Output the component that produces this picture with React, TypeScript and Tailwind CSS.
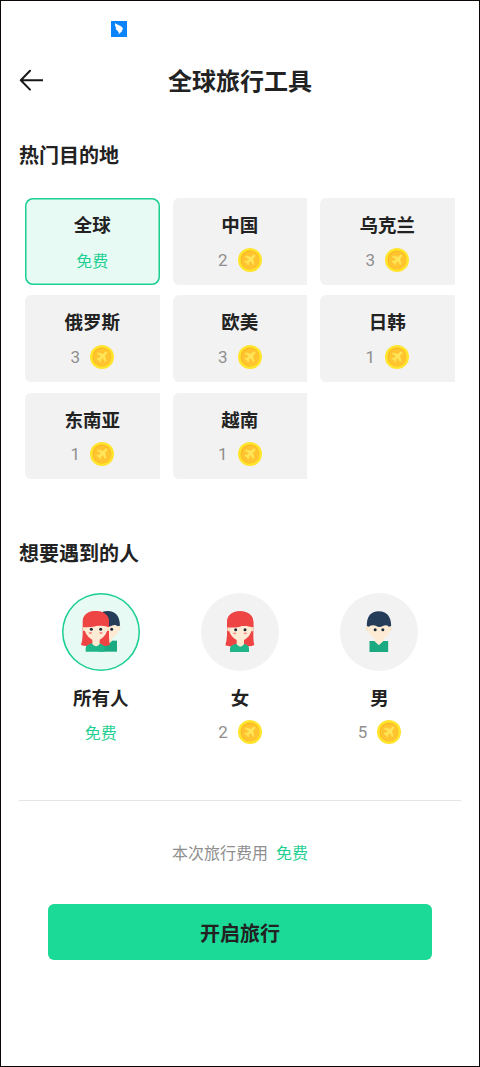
import { useState } from 'react';

interface Destination {
  name: string;
  price: number;
}

interface Person {
  id: 'all' | 'female' | 'male';
  label: string;
  price: number;
}

const destinations: Destination[] = [
  { name: '全球', price: 0 },
  { name: '中国', price: 2 },
  { name: '乌克兰', price: 3 },
  { name: '俄罗斯', price: 3 },
  { name: '欧美', price: 3 },
  { name: '日韩', price: 1 },
  { name: '东南亚', price: 1 },
  { name: '越南', price: 1 },
];

const people: Person[] = [
  { id: 'all', label: '所有人', price: 0 },
  { id: 'female', label: '女', price: 2 },
  { id: 'male', label: '男', price: 5 },
];

function Coin() {
  return (
    <svg className="w-6 h-6" viewBox="0 0 24 24">
      <circle cx="12" cy="12" r="12" fill="#ffe42e" />
      <circle cx="12" cy="12" r="9.4" fill="#f9b51f" />
      <circle cx="12.3" cy="12.4" r="8.8" fill="#ffc42f" />
      <path
        d="M16.9 7.1c-.6-.5-1.5-.2-2.1.4l-1.7 1.7-5-1.3-.9.9 4 2.3-2 2.1-1.7-.2-.7.7 2.2 1.2 1.2 2.2.7-.7-.2-1.7 2.1-2 2.3 4 .9-.9-1.3-5 1.7-1.7c.6-.6 1-1.5.5-2z"
        fill="#ffe65a"
        stroke="#ffe65a"
        strokeWidth="0.5"
      />
    </svg>
  );
}

function Girl() {
  return (
    <g>
      <path d="M96 126V112C96 91 111 79 135 79S175 91 175 112V150C175 164 176 173 178 180Q166 186 153 183H118Q104 186 91 181Q95 169 96 150Z" fill="#ef4444" />
      <path d="M105 201V190Q105 182 113 180L124 176H147L156 180Q162 182 162 190V201Z" fill="#1fb588" />
      <path d="M125 158H147V178Q136 192 125 178Z" fill="#fde8d0" />
      <path d="M103 123H169V139Q165 153 152 162Q136 174 120 162Q106 152 103 139Z" fill="#fdebd5" />
      <rect x="97" y="126" width="7" height="13" rx="3" fill="#fbe3c6" />
      <rect x="168" y="126" width="7" height="13" rx="3" fill="#fbe3c6" />
      <path d="M97 127V112C97 91 111 79 135 79S175 91 175 112V126Q160 127 149 119Q130 130 97 127Z" fill="#ef4444" />
      <circle cx="122" cy="134" r="4.5" fill="#1d2b38" />
      <circle cx="150" cy="134" r="4.5" fill="#1d2b38" />
      <ellipse cx="119" cy="145" rx="5" ry="2.7" fill="#ff8b83" />
      <ellipse cx="151" cy="145" rx="5" ry="2.7" fill="#ff8b83" />
    </g>
  );
}

function Boy() {
  return (
    <g>
      <path d="M105 201V168H161V201Z" fill="#1ba981" />
      <path d="M120 160H146V169L133 181L120 169Z" fill="#fdebd5" />
      <rect x="95" y="123" width="10" height="15" rx="5" fill="#fbe3c6" />
      <rect x="161" y="123" width="10" height="15" rx="5" fill="#fbe3c6" />
      <path d="M101 118H166V136Q165 147 154 155Q133 174 113 155Q102 147 101 136Z" fill="#fdebd5" />
      <path d="M97 123Q96 80 133 79Q169 80 170 123L163 125Q156 118 145 123Q134 129 124 122Q112 119 103 125Z" fill="#263d59" />
      <circle cx="122" cy="134" r="4.5" fill="#1d2b38" />
      <circle cx="145" cy="134" r="4.5" fill="#1d2b38" />
    </g>
  );
}

function Avatar({ id }: { id: Person['id'] }) {
  if (id === 'all') {
    return (
      <svg className="w-[78px] h-[78px] shrink-0" viewBox="36 24 234 234">
        <g transform="translate(40 -1)">
          <Boy />
        </g>
        <g transform="translate(2 -1)">
          <Girl />
        </g>
      </svg>
    );
  }
  return (
    <svg className="w-[78px] h-[78px] shrink-0" viewBox={id === 'female' ? '18 24 234 234' : '16.5 24 234 234'}>
      {id === 'female' ? <Girl /> : <Boy />}
    </svg>
  );
}

function Price({ price }: { price: number }) {
  if (price === 0) {
    return <div className="h-6 flex items-center justify-center text-base text-[#1fd092]">免费</div>;
  }
  return (
    <div className="h-6 flex items-center justify-center gap-2.5 font-['Roboto','Noto_Sans_CJK_SC',sans-serif] text-[17px] text-[#8f8f8f]">
      <span className="pt-0.5">{price}</span>
      <Coin />
    </div>
  );
}

export default function App() {
  const [destination, setDestination] = useState('全球');
  const [person, setPerson] = useState<Person['id']>('all');

  return (
    <div className="w-[480px] h-[1067px] border border-[#0c0704] bg-white text-[#222] font-['Noto_Sans_CJK_SC',sans-serif] overflow-hidden">
      {/* Status bar */}
      <div className="h-[52px] pt-5 pl-[110px]">
        <svg className="w-4 h-4" viewBox="0 0 16 16">
          <rect width="16" height="16" fill="#0b84fb" />
          <path d="M4 2.2C6.8 3.8 10.8 5 11.8 7.2C12 8.2 11.3 9.2 10.6 9.9L11.3 10.1L7.4 13.6L8 11.3L6.7 11L7.3 10C5.5 9.3 4.8 8.2 4.7 7L5.4 7.1C4.3 5.8 3.8 4 4 2.2Z" fill="#fff" />
        </svg>
      </div>

      {/* Header */}
      <header className="h-[54px] grid grid-cols-[60px_1fr_60px] items-center">
        <button className="pl-[18px]">
          <svg className="w-6 h-6" viewBox="0 0 24 24" fill="none" stroke="#171717" strokeWidth="2" strokeLinecap="round" strokeLinejoin="round">
            <path d="M24 12.2H1.8M11 2.8L1.8 12.2l9.2 9.4" />
          </svg>
        </button>
        <h1 className="text-center text-2xl font-bold">全球旅行工具</h1>
      </header>

      {/* Destinations */}
      <section className="pt-[34px]">
        <h2 className="pl-[18px] text-xl leading-7 font-bold">热门目的地</h2>
        <div className="mt-[29px] ml-6 grid grid-cols-[134.5px_134.5px_134.5px] gap-x-[13px] gap-y-[10.8px]">
          {destinations.map(item => (
            <button
              key={item.name}
              onClick={() => setDestination(item.name)}
              className={`h-[86.5px] pt-[13px] flex flex-col items-center gap-[9.5px] ${
                destination === item.name
                  ? 'rounded-lg bg-[#e7faf4] shadow-[inset_0_0_0_1.5px_#1bcf8f]'
                  : 'rounded-l-[6px] bg-[#f2f2f2]'
              }`}
            >
              <span className="text-[18.5px] leading-[27px] font-bold">{item.name}</span>
              <Price price={item.price} />
            </button>
          ))}
        </div>
      </section>

      {/* People */}
      <section className="pt-[59.5px]">
        <h2 className="pl-[18px] text-xl leading-7 font-bold">想要遇到的人</h2>
        <div className="mt-[26px] ml-[30px] grid grid-cols-[139.4px_139.4px_139.4px]">
          {people.map(item => (
            <button key={item.id} onClick={() => setPerson(item.id)} className="flex flex-col items-center">
              <span
                className={`w-[78px] h-[78px] rounded-full ${
                  person === item.id ? 'bg-[#e7faf4] shadow-[inset_0_0_0_1.5px_#1bcf8f]' : 'bg-[#f2f2f2]'
                }`}
              >
                <Avatar id={item.id} />
              </span>
              <span className="mt-[13px] mb-[9px] text-[18.5px] leading-[27px] font-bold">{item.label}</span>
              <Price price={item.price} />
            </button>
          ))}
        </div>
      </section>

      <div className="mt-14 mx-[18px] border-t border-[#e5e5e5]" />

      {/* Total and action */}
      <div className="mt-[39px] h-6 flex items-center justify-center gap-2 text-base">
        <span className="text-[#8f8f8f]">本次旅行费用</span>
        <span className="text-[#1fd092]">免费</span>
      </div>
      <button className="mt-10 mx-[47px] w-[384px] h-14 pt-0.5 flex items-center justify-center rounded-[6px] bg-[#1bd996] text-xl font-bold">
        开启旅行
      </button>
    </div>
  );
}
